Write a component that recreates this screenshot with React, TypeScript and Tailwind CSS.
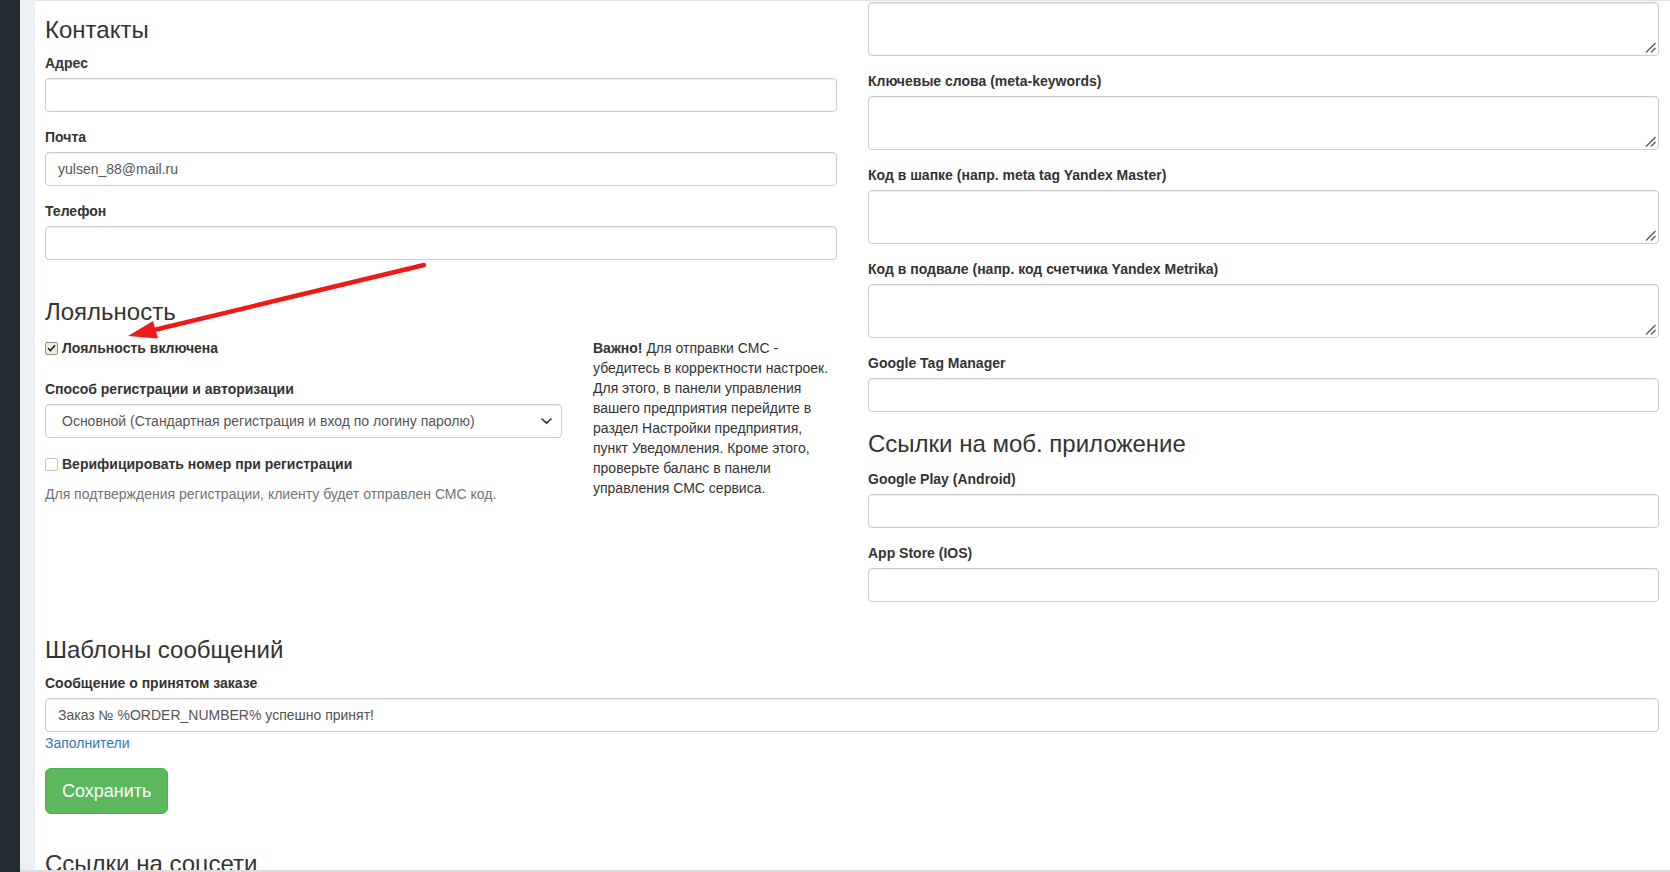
import React from "react";

const inputCls =
  "block w-full h-[34px] shrink-0 rounded-[4px] border border-[#ccc] bg-white px-[12px] text-[14px] leading-5 text-[#555] shadow-[inset_0_1px_1px_rgba(0,0,0,0.075)] outline-none font-['Liberation_Sans',Arial,sans-serif]";
const textareaCls =
  "block w-full h-[54px] resize-none rounded-[4px] border border-[#ccc] bg-white px-[12px] py-[6px] text-[14px] leading-5 text-[#555] shadow-[inset_0_1px_1px_rgba(0,0,0,0.075)] outline-none font-['Liberation_Sans',Arial,sans-serif]";

function Label({ children }: { children: React.ReactNode }) {
  return <div className="mb-[5px] h-5 shrink-0 text-[14px] font-bold leading-5 text-[#333]">{children}</div>;
}

function Field({ label, value, last }: { label: string; value?: string; last?: boolean }) {
  return (
    <div className={last ? "" : "mb-[15px]"}>
      <Label>{label}</Label>
      <input className={inputCls} defaultValue={value ?? ""} readOnly />
    </div>
  );
}

function Area() {
  return (
    <div className="relative">
      <textarea className={textareaCls} rows={2} readOnly />
      <svg className="pointer-events-none absolute bottom-[3px] right-[3px]" width="11" height="11" viewBox="0 0 11 11">
        <line x1="1" y1="10.5" x2="10.5" y2="1" stroke="#555" strokeWidth="1.3" />
        <line x1="6" y1="10.5" x2="10.5" y2="6" stroke="#555" strokeWidth="1.3" />
      </svg>
    </div>
  );
}

function AreaField({ label }: { label: string }) {
  return (
    <div className="mb-[15px]">
      <Label>{label}</Label>
      <Area />
    </div>
  );
}

function Check({ checked }: { checked?: boolean }) {
  return (
    <span
      className={
        "flex h-[13px] w-[13px] shrink-0 items-center justify-center rounded-[2px] border " +
        (checked ? "border-[#8f8f8f] bg-[#f4eed8]" : "border-[#c4c4c4] bg-white")
      }
    >
      {checked && (
        <svg width="9" height="8" viewBox="0 0 9 8">
          <path d="M1 4.2 L3.4 6.6 L8 1.2" fill="none" stroke="#222" strokeWidth="1.6" />
        </svg>
      )}
    </span>
  );
}

function Heading({ children, className }: { children: React.ReactNode; className: string }) {
  return <h3 className={"h-[26px] shrink-0 text-[24px] font-normal leading-[26px] text-[#333] " + className}>{children}</h3>;
}

export default function App() {
  return (
    <div className="relative flex h-[872px] w-[1670px] overflow-hidden bg-white font-['Liberation_Sans',Arial,sans-serif] text-[14px] leading-5 text-[#333]">
      <div className="w-[20px] shrink-0 bg-[#222d32]" />
      <div className="w-[15px] shrink-0 bg-[#ecf0f5]" />
      <div className="flex flex-1 flex-col border-t border-[#e3e3e3] pl-[10px] pr-[11px] *:shrink-0">
        <div className="grid grid-cols-[792px_791px] items-start gap-x-[31px]">
          {/* Left column */}
          <div className="flex flex-col">
            <Heading className="mt-[16px] mb-[10px]">Контакты</Heading>
            <Field label="Адрес" />
            <Field label="Почта" value="yulsen_88@mail.ru" />
            <Field label="Телефон" />
            <Heading className="mt-[24px] mb-[13px]">Лояльность</Heading>
            <div className="grid grid-cols-[517px_244px] gap-x-[31px]">
              <div className="flex flex-col">
                <div className="flex h-5 items-center gap-[4px] font-bold">
                  <Check checked />
                  <span>Лояльность включена</span>
                </div>
                <div className="mt-[21px] h-5 font-bold">Способ регистрации и авторизации</div>
                <div className="mt-[5px] flex h-[34px] items-center justify-between rounded-[4px] border border-[#ccc] bg-white pl-[16px] pr-[8px] text-[#555] shadow-[inset_0_1px_1px_rgba(0,0,0,0.075)]">
                  <span>Основной (Стандартная регистрация и вход по логину паролю)</span>
                  <svg width="13" height="8" viewBox="0 0 13 8">
                    <path d="M1.5 1.5 L6.5 6.2 L11.5 1.5" fill="none" stroke="#333" strokeWidth="1.6" />
                  </svg>
                </div>
                <div className="mt-[16px] flex h-5 items-center gap-[4px] font-bold">
                  <Check />
                  <span>Верифицировать номер при регистрации</span>
                </div>
                <p className="mt-[10px] h-5 text-[#737373]">
                  Для подтверждения регистрации, клиенту будет отправлен СМС код.
                </p>
              </div>
              <div className="text-[#333]">
                <b>Важно!</b> Для отправки СМС - убедитесь в корректности настроек. Для этого, в панели
                управления вашего предприятия перейдите в раздел Настройки предприятия, пункт
                Уведомления. Кроме этого, проверьте баланс в панели управления СМС сервиса.
              </div>
            </div>
          </div>

          {/* Right column */}
          <div className="flex flex-col">
            <div className="mt-[1px] mb-[15px]">
              <Area />
            </div>
            <AreaField label="Ключевые слова (meta-keywords)" />
            <AreaField label="Код в шапке (напр. meta tag Yandex Master)" />
            <AreaField label="Код в подвале (напр. код счетчика Yandex Metrika)" />
            <Field label="Google Tag Manager" />
            <Heading className="mt-[4px] mb-[12px]">Ссылки на моб. приложение</Heading>
            <Field label="Google Play (Android)" />
            <Field label="App Store (IOS)" last />
          </div>
        </div>

        <Heading className="mt-[35px] mb-[10px]">Шаблоны сообщений</Heading>
        <Label>Сообщение о принятом заказе</Label>
        <input className={inputCls} defaultValue="Заказ № %ORDER_NUMBER% успешно принят!" readOnly />
        <a className="mt-[1px] block h-5 self-start text-[#337ab7]">Заполнители</a>
        <button className="mt-[15px] h-[46px] self-start rounded-[6px] border border-[#4cae4c] bg-[#5cb85c] px-[16px] text-[18px] leading-[24px] text-white">
          Сохранить
        </button>
        <Heading className="mt-[37px]">Ссылки на соцсети</Heading>
      </div>

      {/* bottom edge line */}
      <div className="pointer-events-none absolute bottom-0 left-[20px] right-0 h-[2px] bg-[#dcdcdc]" />

      {/* red annotation arrow */}
      <svg className="pointer-events-none absolute left-0 top-0" width="1670" height="872" viewBox="0 0 1670 872">
        <line x1="424" y1="265" x2="154" y2="330" stroke="#f01818" strokeWidth="4.5" strokeLinecap="round" />
        <polygon points="128,336 158,338.5 153,321" fill="#f01818" />
      </svg>
    </div>
  );
}
